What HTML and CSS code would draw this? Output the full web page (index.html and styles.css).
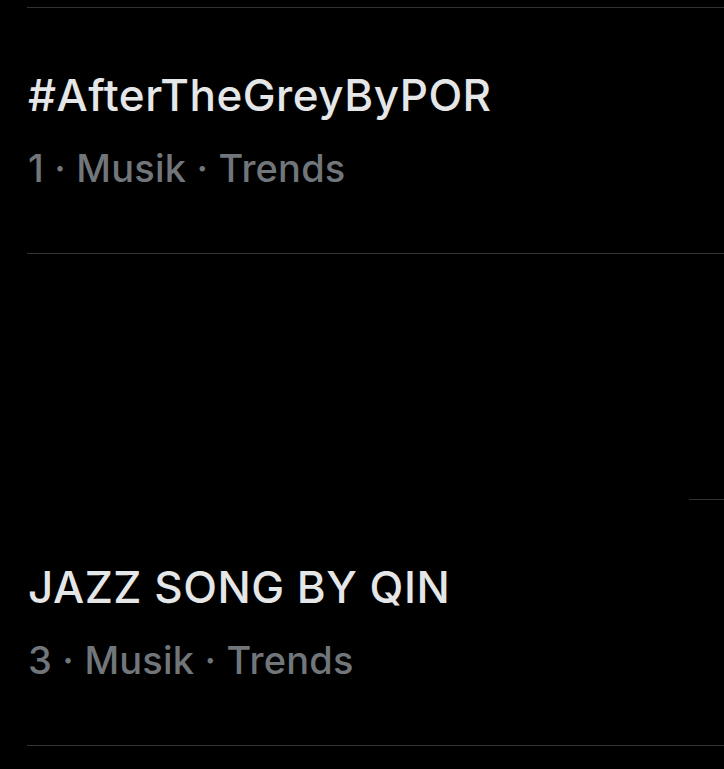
FILE: index.html
```html
<!DOCTYPE html>
<html lang="de">
<head>
<meta charset="utf-8">
<link rel="stylesheet" href="styles.css">
</head>
<body>
<div class="list">
  <div class="top-sep"></div>
  <div class="trend">
    <div class="title">#AfterTheGreyByPOR</div>
    <div class="meta">1 · Musik · Trends</div>
  </div>
  <div class="blank"></div>
  <div class="trend">
    <div class="title">JAZZ SONG BY QIN</div>
    <div class="meta">3 · Musik · Trends</div>
  </div>
</div>
</body>
</html>
```
FILE: styles.css
```css
html, body {
  margin: 0;
  padding: 0;
  background: #000;
}
body {
  font-family: Inter, "Noto Sans", "Liberation Sans", sans-serif;
  width: 724px;
  height: 769px;
  overflow: hidden;
}
.list {
  display: flex;
  flex-direction: column;
}
.top-sep {
  height: 7px;
  margin-left: 27px;
  border-bottom: 1px solid #2f3336;
}
.trend {
  height: 245px;
  margin-left: 27px;
  border-bottom: 1px solid #2f3336;
  padding-left: 1px;
  display: flex;
  flex-direction: column;
}
.blank {
  height: 245px;
  margin-left: 689px;
  border-bottom: 1px solid #2f3336;
}
.title {
  margin-top: 61px;
  font-size: 44px;
  line-height: 52px;
  letter-spacing: 0.5px;
  color: #e4e6e7;
  font-weight: 500;
  white-space: nowrap;
}
.meta {
  margin-top: 24px;
  font-size: 38px;
  line-height: 46px;
  letter-spacing: 0.2px;
  color: #71767b;
  font-weight: 500;
  white-space: nowrap;
}
```
